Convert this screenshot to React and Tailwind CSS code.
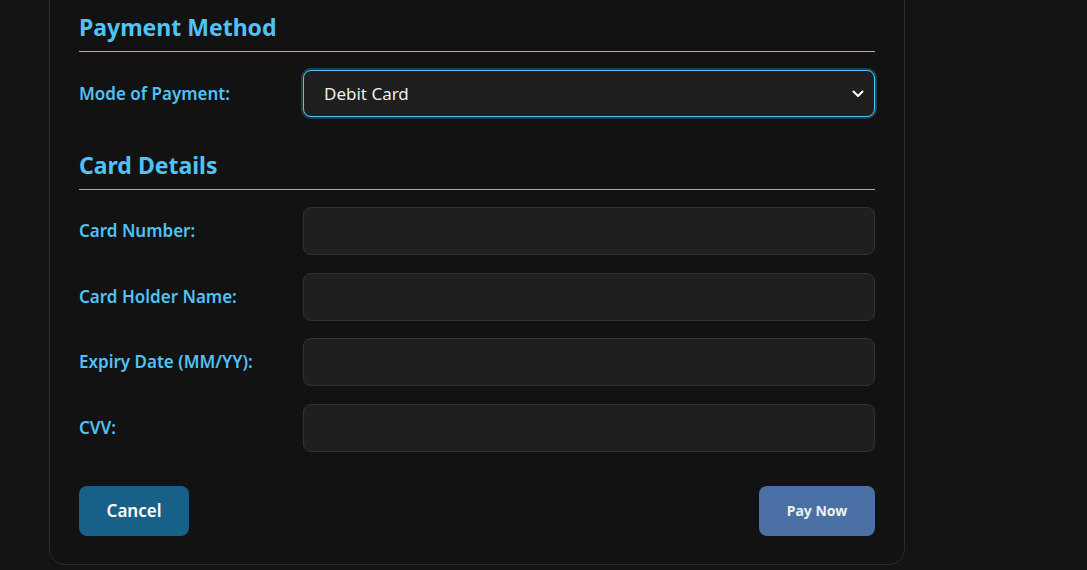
import React from "react";

const font = { fontFamily: '"Noto Sans", "Open Sans", sans-serif' };

function Row({ label, children }) {
  return (
    <div className="grid grid-cols-[224px_1fr] items-center">
      <label className="text-[17px] font-semibold text-[#4fc3f7]">{label}</label>
      {children}
    </div>
  );
}

function Field() {
  return (
    <input
      type="text"
      className="h-[48px] w-full rounded-[8px] border border-[#333333] bg-[#1f1f1f] px-5 text-[17px] text-[#e0e0e0] outline-none"
    />
  );
}

export default function App() {
  return (
    <div className="min-h-[570px] overflow-hidden bg-[#141414]" style={font}>
      <div className="-mt-10 ml-[49px] w-[856px] rounded-[16px] border border-[#2c2c2c] bg-[#121212] px-[29px] pt-[50px] pb-[28px]">
        <h2 className="border-b border-[#9fb3bf] pb-2 text-[23px] leading-[32px] font-bold text-[#4fc3f7]">
          Payment Method
        </h2>
        <div className="mt-[18px]">
          <Row label="Mode of Payment:">
            <div className="relative">
              <select
                defaultValue="debit"
                className="h-[47px] w-full appearance-none rounded-[8px] border border-[#4fc3f7] bg-[#1f1f1f] px-5 text-[17px] text-[#eeeeee] shadow-[0_0_0_2px_rgba(79,195,247,0.25)] outline-none"
                style={font}
              >
                <option value="debit">Debit Card</option>
                <option value="credit">Credit Card</option>
              </select>
              <svg
                className="pointer-events-none absolute top-1/2 right-[11px] -translate-y-1/2"
                width="12"
                height="8"
                viewBox="0 0 12 8"
                fill="none"
              >
                <path d="M1.5 1.5 L6 6 L10.5 1.5" stroke="#ffffff" strokeWidth="2" strokeLinecap="round" strokeLinejoin="round" />
              </svg>
            </div>
          </Row>
        </div>

        <h2 className="mt-8 border-b border-[#9fb3bf] pb-2 text-[23px] leading-[32px] font-bold text-[#4fc3f7]">
          Card Details
        </h2>
        <div className="mt-[17px] flex flex-col gap-[17.5px]">
          <Row label="Card Number:">
            <Field />
          </Row>
          <Row label="Card Holder Name:">
            <Field />
          </Row>
          <Row label="Expiry Date (MM/YY):">
            <Field />
          </Row>
          <Row label="CVV:">
            <Field />
          </Row>
        </div>

        <div className="mt-[34px] flex items-center justify-between">
          <button className="h-[50px] w-[110px] rounded-[8px] bg-[#176189] text-[17px] font-semibold text-white">
            Cancel
          </button>
          <button className="h-[50px] w-[116px] rounded-[8px] bg-[#4b70a6] text-[14px] font-bold text-[#f0f0f0]">
            Pay Now
          </button>
        </div>
      </div>
    </div>
  );
}
